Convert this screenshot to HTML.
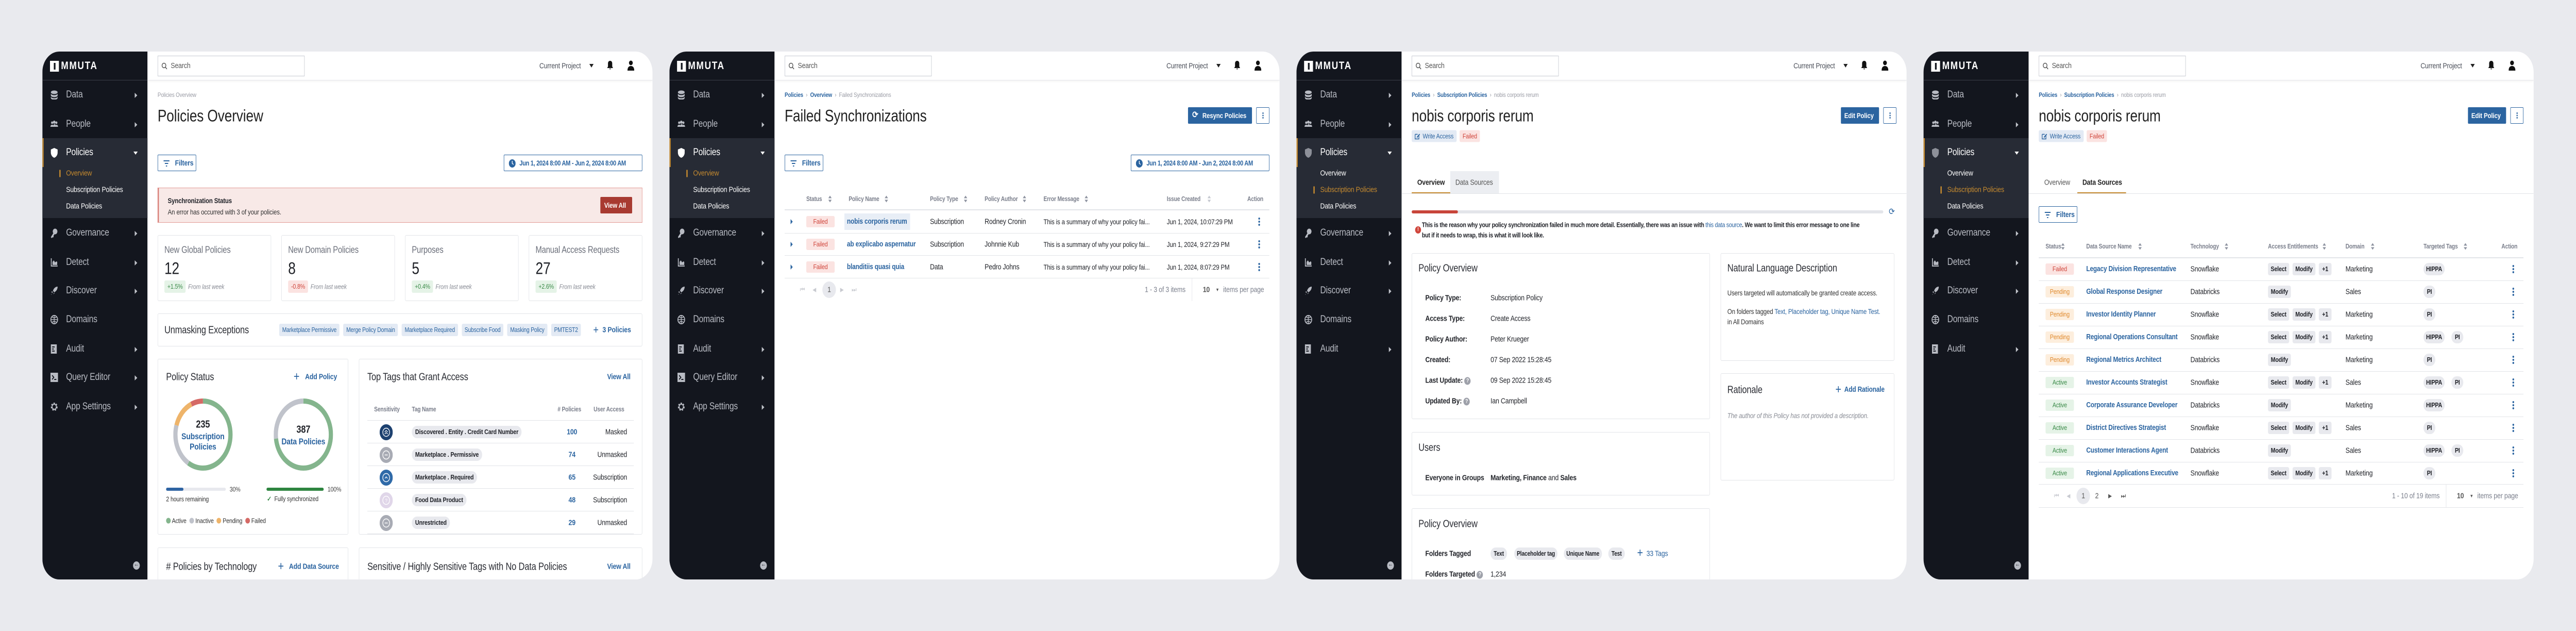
<!DOCTYPE html>
<html style="overflow:hidden"><head><meta charset="utf-8">
<style>
*{box-sizing:border-box;margin:0;padding:0;white-space:nowrap}
html{overflow:hidden}
body{width:6080px;height:1224px;background:#e9eaee;font-family:"Liberation Sans",Arial,sans-serif;color:#1f2127;position:relative;overflow:hidden;letter-spacing:-0.2px;transform-origin:0 0}
.p{position:absolute;top:100px;width:1440px;height:1024px;background:#fff;border-radius:40px;overflow:hidden}
.sb{position:absolute;left:0;top:0;width:248px;height:1024px;background:#13161e}
.x{position:absolute;white-space:nowrap;transform:translateY(-50%)}
.b{position:absolute}
.lsq{position:absolute;left:18px;top:18px;width:21px;height:21px;background:#fff}
.lsq:after{content:"";position:absolute;left:9px;top:4px;width:4px;height:13px;background:#13161e}
.lt{position:absolute;left:44px;top:28px;transform:translateY(-50%);color:#fff;font-weight:bold;font-size:21px;letter-spacing:2px}
.sbl{position:absolute;left:0;top:55px;width:248px;height:1px;background:#3a3e48}
.grp{position:absolute;left:0;top:168px;width:248px;height:155px;background:#272b35}
.obar{position:absolute;left:0;top:168px;width:3px;height:56px;background:#c58a2f}
.ni{position:absolute;left:0;width:248px;height:40px;margin-top:-20px;color:#b8bbc3;font-size:19px}
.ni svg{position:absolute;left:19px;top:11px}
.ni span{position:absolute;left:56px;top:50%;transform:translateY(-50%)}
.ni i{position:absolute;left:218px;top:16px;width:0;height:0;border-top:5px solid transparent;border-bottom:5px solid transparent;border-left:6px solid #c0c3ca}
.ni i.dn{left:215px;top:18px;border-left:5px solid transparent;border-right:5px solid transparent;border-top:6px solid #fff;border-bottom:0}
.si{position:absolute;left:56px;color:#fff;font-size:15px;transform:translateY(-50%)}
.si.on{color:#c58a2f}
.si.on:before{content:"";position:absolute;left:-16px;top:2px;width:3px;height:14px;background:#c58a2f}
.col{position:absolute;left:214px;top:989px;width:16px;height:16px;border-radius:50%;background:#b8bbc3}
.col:after{content:"←";position:absolute;left:2px;top:-2px;font-size:12px;color:#13161e;font-weight:bold}
.hd{position:absolute;left:248px;top:0;width:1192px;height:56px;border-bottom:1px solid #e6e7eb;box-shadow:0 2px 5px rgba(0,0,0,.05)}
.srch{position:absolute;left:272px;top:8px;width:347px;height:40px;border:1px solid #c7cad1}
.srch span{position:absolute;left:30px;top:10px;font-size:15px;color:#555}
.cp{position:absolute;left:1173px;top:28px;transform:translateY(-50%);font-size:15px;color:#4a4e58}
.bc{font-size:12px;color:#9a9ca5}
.bc b{color:#2b64a0}
.ttl{font-size:32px;color:#222}
.btn-o{position:absolute;border:1px solid #2b64a0;color:#2b64a0;font-weight:bold;font-size:15px;border-radius:2px}
.btn-f{position:absolute;background:#2b64a0;color:#fff;font-weight:bold;font-size:15px;border-radius:2px}
.card{position:absolute;border:1px solid #e2e4e8;border-radius:3px;background:#fff}
.ct{font-size:20px;color:#2a2c33}
.blue{color:#2b64a0}
.lk{color:#2b64a0;font-weight:bold}
.chip{position:absolute;height:24px;line-height:24px;padding:0 8px;font-size:13px;border-radius:3px;transform:translateY(-50%)}
.cb{background:#e3eaf4;color:#2b64a0}
.cg{background:#e8e9ee;color:#1f2127;font-weight:bold;border-radius:12px}
.cgs{background:#e8e9ee;color:#1f2127;font-weight:bold;border-radius:4px}
.st{position:absolute;height:22px;line-height:22px;text-align:center;font-size:13px;border-radius:3px;transform:translateY(-50%)}
.fa{background:#fbe3e1;color:#d0463c}
.pe{background:#fdeedd;color:#e08a2e}
.ac{background:#e5f3e7;color:#3a8a48}
.th{font-size:12.5px;color:#7c808d;font-weight:bold}
.hl{position:absolute;height:1px;background:#e2e4e8}
.td{font-size:15px}
.kb{position:absolute;width:4px;height:16px;transform:translateY(-50%)}
.kb:before,.kb:after,.kb span{content:"";position:absolute;left:0;width:4px;height:4px;border-radius:50%;background:#2b64a0}
.kb:before{top:0}.kb span{top:6px}.kb:after{top:12px}
.srt{position:absolute;transform:translateY(-50%)}
.um{position:absolute;left:559px;top:528px;display:flex;gap:9px}
.um div{height:24px;line-height:24px;padding:0 7px;font-size:12.5px;border-radius:3px;background:#e3eaf4;color:#2b64a0}
</style></head><body>

<!-- ========== PANEL 1 ========== -->
<div class="p" style="left:100px">
 <div class="sb">
  <div class="lsq"></div><div class="lt">MMUTA</div><div class="sbl"></div>
  <div class="grp"></div><div class="obar"></div>
  <div class="ni" style="top:84px"><svg width="18" height="18"><ellipse cx="9" cy="4" rx="8" ry="3.5" fill="#b8bbc3"/><path d="M1 6v4c0 2 3.5 3.5 8 3.5s8-1.5 8-3.5V6c0 2-3.5 3.5-8 3.5S1 8 1 6zM1 12v3c0 2 3.5 3.5 8 3.5s8-1.5 8-3.5v-3c0 2-3.5 3.5-8 3.5S1 14 1 12z" fill="#b8bbc3"/></svg><span>Data</span><i></i></div>
  <div class="ni" style="top:141px"><svg width="18" height="18"><circle cx="4" cy="6" r="2.5" fill="#b8bbc3"/><circle cx="14" cy="6" r="2.5" fill="#b8bbc3"/><circle cx="9" cy="5" r="3" fill="#b8bbc3"/><path d="M0 14c0-3 2-4 4-4s3 1 3 1 1-2 2-2 3 0 4 2c0 0 1-1 1-1 2 0 4 1 4 4z" fill="#b8bbc3"/></svg><span>People</span><i></i></div>
  <div class="ni" style="top:196px;color:#fff"><svg width="18" height="20"><path d="M9 0L1 3v6c0 5 4 9 8 10 4-1 8-5 8-10V3z" fill="#fff"/></svg><span>Policies</span><i class="dn"></i></div>
  <div class="si on" style="top:236px">Overview</div>
  <div class="si" style="top:268px">Subscription Policies</div>
  <div class="si" style="top:300px">Data Policies</div>
  <div class="ni" style="top:352px"><svg width="18" height="20"><circle cx="11" cy="6" r="5.5" fill="#b8bbc3"/><path d="M7 9L1 17l2 2 2-2 1 1 2-2-1-1 3-4z" fill="#b8bbc3"/></svg><span>Governance</span><i></i></div>
  <div class="ni" style="top:409px"><svg width="18" height="18"><path d="M1 1v16h16v-2H3V1z M5 14V8l3-3 3 4 3-2 2 1v6z" fill="#b8bbc3"/></svg><span>Detect</span><i></i></div>
  <div class="ni" style="top:464px"><svg width="18" height="18"><path d="M17 1c-5 0-9 3-11 8l3 3c5-2 8-6 8-11zM5 10l-3 1 3 3zM8 13l-1 3 3-3zM3 15l-2 2 2-1z" fill="#b8bbc3"/></svg><span>Discover</span><i></i></div>
  <div class="ni" style="top:520px"><svg width="18" height="18"><circle cx="9" cy="9" r="8" fill="none" stroke="#b8bbc3" stroke-width="2"/><path d="M1 9h16M9 1v16M4 4q5 3 10 0M4 14q5-3 10 0" stroke="#b8bbc3" stroke-width="1.5" fill="none"/></svg><span>Domains</span></div>
  <div class="ni" style="top:577px"><svg width="16" height="18"><path d="M1 0h14v18H1z" fill="#b8bbc3"/><path d="M4 4h6v2H4zM4 8h4v2H4zM4 12h6v2H4z" fill="#13161e"/></svg><span>Audit</span><i></i></div>
  <div class="ni" style="top:632px"><svg width="18" height="18"><path d="M0 0h18v18H0z" fill="#b8bbc3"/><path d="M4 5l4 4-4 4M9 13h5" stroke="#13161e" stroke-width="2" fill="none"/></svg><span>Query Editor</span><i></i></div>
  <div class="ni" style="top:689px"><svg width="18" height="18"><circle cx="9" cy="9" r="6" fill="none" stroke="#b8bbc3" stroke-width="4" stroke-dasharray="3 2.3"/><circle cx="9" cy="9" r="5" fill="none" stroke="#b8bbc3" stroke-width="2"/></svg><span>App Settings</span><i></i></div>
  <div class="col"></div>
 </div>
 <div class="hd"></div>
 <div class="srch"><svg class="b" style="left:8px;top:12px" width="14" height="14"><circle cx="6" cy="6" r="4.5" stroke="#555" stroke-width="1.6" fill="none"/><path d="M9.5 9.5L13 13" stroke="#555" stroke-width="1.6"/></svg><span>Search</span></div>
 <div class="cp">Current Project</div>
 <div class="b" style="left:1291px;top:24px;border-left:5px solid transparent;border-right:5px solid transparent;border-top:7px solid #222"></div>
 <svg class="b" style="left:1332px;top:18px" width="16" height="19"><path d="M8 0c-3 0-5 2-5 5v6l-2 3h14l-2-3V5c0-3-2-5-5-5zM6 15h4c0 2-4 2-4 0z" fill="#111"/></svg>
 <svg class="b" style="left:1381px;top:17px" width="16" height="20"><circle cx="8" cy="5" r="4.5" fill="#111"/><path d="M0 20c0-6 3-9 8-9s8 3 8 9z" fill="#111"/></svg>

 <div class="x bc" style="left:272px;top:84px">Policies Overview</div>
 <div class="x ttl" style="left:272px;top:125px">Policies Overview</div>
 <div class="btn-o" style="left:272px;top:200px;width:91px;height:32px"><svg class="b" style="left:13px;top:10px" width="14" height="12"><path d="M0 1h14M3 6h8M5.5 11h3" stroke="#2b64a0" stroke-width="2"/></svg><span class="b" style="left:40px;top:7px">Filters</span></div>
 <div class="btn-o" style="left:1089px;top:200px;width:327px;height:32px"><svg class="b" style="left:11px;top:8px" width="16" height="16"><circle cx="8" cy="8" r="8" fill="#2b64a0"/><path d="M8 3v5l3 2" stroke="#fff" stroke-width="1.6" fill="none"/></svg><span class="b" style="left:36px;top:8px;font-size:13.5px;letter-spacing:-0.4px">Jun 1, 2024 8:00 AM - Jun 2, 2024 8:00 AM</span></div>

 <div class="b" style="left:272px;top:264px;width:1144px;height:68px;background:#f8e9e7;border:1px solid #e29a95;border-left:3px solid #d9807a"></div>
 <div class="x" style="left:296px;top:289px;font-size:14px;font-weight:bold">Synchronization Status</div>
 <div class="x" style="left:296px;top:311px;font-size:14px;color:#333">An error has occurred with 3 of your policies.</div>
 <div class="btn-f" style="left:1317px;top:282px;width:75px;height:32px;background:#a83a31;border-radius:2px"><span class="b" style="left:9px;top:8px;font-size:14px">View All</span></div>

 <div class="card" style="left:272px;top:356px;width:268px;height:128px"></div>
 <div class="card" style="left:564px;top:356px;width:268px;height:128px"></div>
 <div class="card" style="left:856px;top:356px;width:268px;height:128px"></div>
 <div class="card" style="left:1148px;top:356px;width:268px;height:128px"></div>
 <div class="x" style="left:288px;top:385px;font-size:18px;color:#6b6f7a">New Global Policies</div>
 <div class="x" style="left:580px;top:385px;font-size:18px;color:#6b6f7a">New Domain Policies</div>
 <div class="x" style="left:872px;top:385px;font-size:18px;color:#6b6f7a">Purposes</div>
 <div class="x" style="left:1164px;top:385px;font-size:18px;color:#6b6f7a">Manual Access Requests</div>
 <div class="x" style="left:288px;top:421px;font-size:32px">12</div>
 <div class="x" style="left:580px;top:421px;font-size:32px">8</div>
 <div class="x" style="left:872px;top:421px;font-size:32px">5</div>
 <div class="x" style="left:1164px;top:421px;font-size:32px">27</div>
 <div class="chip ac" style="left:288px;top:456px;padding:0 7px">+1.5%</div><div class="x" style="left:344px;top:456px;font-size:13px;font-style:italic;color:#8a8d96">From last week</div>
 <div class="chip fa" style="left:580px;top:456px;padding:0 7px">-0.8%</div><div class="x" style="left:633px;top:456px;font-size:13px;font-style:italic;color:#8a8d96">From last week</div>
 <div class="chip ac" style="left:872px;top:456px;padding:0 7px">+0.4%</div><div class="x" style="left:928px;top:456px;font-size:13px;font-style:italic;color:#8a8d96">From last week</div>
 <div class="chip ac" style="left:1164px;top:456px;padding:0 7px">+2.6%</div><div class="x" style="left:1220px;top:456px;font-size:13px;font-style:italic;color:#8a8d96">From last week</div>

 <div class="card" style="left:272px;top:508px;width:1144px;height:64px"></div>
 <div class="x ct" style="left:288px;top:541px">Unmasking Exceptions</div>
 <div class="um"><div>Marketplace Permissive</div><div>Merge Policy Domain</div><div>Marketplace Required</div><div>Subscribe Food</div><div>Masking Policy</div><div>PMTEST2</div></div>
 <div class="x lk" style="left:1300px;top:540px;font-size:22px;font-weight:normal">+</div>
 <div class="x lk" style="left:1322px;top:540px;font-size:15px">3 Policies</div>

 <div class="card" style="left:272px;top:596px;width:450px;height:341px"></div>
 <div class="x ct" style="left:292px;top:632px">Policy Status</div>
 <div class="x lk" style="left:593px;top:631px;font-size:24px;font-weight:normal">+</div>
 <div class="x lk" style="left:620px;top:631px;font-size:15px">Add Policy</div>
 <svg class="b" style="left:309px;top:673px" width="140" height="140"><g transform="rotate(-90 70 70)" fill="none" stroke-width="10">
  <circle cx="70" cy="70" r="65" stroke="#84b58d" stroke-dasharray="240.5 408.4"/>
  <circle cx="70" cy="70" r="65" stroke="#c0c3cb" stroke-dasharray="83.9 408.4" stroke-dashoffset="-240.5"/>
  <circle cx="70" cy="70" r="65" stroke="#eeb46a" stroke-dasharray="55.6 408.4" stroke-dashoffset="-324.4"/>
  <circle cx="70" cy="70" r="65" stroke="#d56a66" stroke-dasharray="28.4 408.4" stroke-dashoffset="-380"/></g></svg>
 <div class="x" style="left:379px;top:724px;font-size:20px;font-weight:bold;transform:translate(-50%,-50%)">235</div>
 <div class="x lk" style="left:379px;top:747px;font-size:17px;transform:translate(-50%,-50%)">Subscription</div>
 <div class="x lk" style="left:379px;top:767px;font-size:17px;transform:translate(-50%,-50%)">Policies</div>
 <svg class="b" style="left:546px;top:673px" width="140" height="140"><g transform="rotate(-90 70 70)" fill="none" stroke-width="10">
  <circle cx="70" cy="70" r="65" stroke="#84b58d" stroke-dasharray="298.4 408.4"/>
  <circle cx="70" cy="70" r="65" stroke="#c0c3cb" stroke-dasharray="110 408.4" stroke-dashoffset="-298.4"/></g></svg>
 <div class="x" style="left:616px;top:734px;font-size:20px;font-weight:bold;transform:translate(-50%,-50%)">387</div>
 <div class="x lk" style="left:616px;top:757px;font-size:17px;transform:translate(-50%,-50%)">Data Policies</div>
 <div class="b" style="left:292px;top:846px;width:141px;height:6px;border-radius:3px;background:#e8e9ee"></div>
 <div class="b" style="left:292px;top:846px;width:41px;height:6px;border-radius:3px;background:#2f64a3"></div>
 <div class="x" style="left:442px;top:849px;font-size:13px;color:#444">30%</div>
 <div class="b" style="left:529px;top:846px;width:135px;height:6px;border-radius:3px;background:#2e8540"></div>
 <div class="x" style="left:673px;top:849px;font-size:13px;color:#444">100%</div>
 <div class="x" style="left:292px;top:868px;font-size:13px;color:#333">2 hours remaining</div>
 <div class="x" style="left:530px;top:868px;font-size:13px;color:#333"><span style="color:#2e8540;font-weight:bold">✓</span>&nbsp; Fully synchronized</div>
 <div class="x" style="left:292px;top:910px;font-size:13px;color:#333"><span style="display:inline-block;width:11px;height:11px;border-radius:50%;background:#84b58d;vertical-align:-1px"></span> Active &nbsp;<span style="display:inline-block;width:11px;height:11px;border-radius:50%;background:#c0c3cb;vertical-align:-1px"></span> Inactive &nbsp;<span style="display:inline-block;width:11px;height:11px;border-radius:50%;background:#eeb46a;vertical-align:-1px"></span> Pending &nbsp;<span style="display:inline-block;width:11px;height:11px;border-radius:50%;background:#d56a66;vertical-align:-1px"></span> Failed</div>

 <div class="card" style="left:747px;top:596px;width:669px;height:341px"></div>
 <div class="x ct" style="left:767px;top:632px">Top Tags that Grant Access</div>
 <div class="x lk" style="left:1333px;top:631px;font-size:15px">View All</div>
 <div class="x th" style="left:783px;top:694px">Sensitivity</div>
 <div class="x th" style="left:872px;top:694px">Tag Name</div>
 <div class="x th" style="left:1216px;top:694px"># Policies</div>
 <div class="x th" style="left:1301px;top:694px">User Access</div>
 <div class="hl" style="left:767px;top:715px;width:629px"></div>
 <div class="hl" style="left:767px;top:759px;width:629px"></div>
 <div class="hl" style="left:767px;top:803px;width:629px"></div>
 <div class="hl" style="left:767px;top:847px;width:629px"></div>
 <div class="hl" style="left:767px;top:891px;width:629px"></div>
 <div class="hl" style="left:767px;top:935px;width:629px"></div>
 <svg class="b" style="left:796px;top:723px" width="31" height="31"><circle cx="15.5" cy="15.5" r="15.5" fill="#1d4170"/><circle cx="15.5" cy="15.5" r="8" fill="none" stroke="#fff" stroke-width="1.5"/><path d="M12 15l3.5-3 3.5 3M12 19l3.5-3 3.5 3" stroke="#fff" stroke-width="1.4" fill="none"/></svg>
 <svg class="b" style="left:796px;top:767px" width="31" height="31"><circle cx="15.5" cy="15.5" r="15.5" fill="#a8abb4"/><circle cx="15.5" cy="15.5" r="8" fill="none" stroke="#fff" stroke-width="1.5"/><path d="M12 15.5h7" stroke="#fff" stroke-width="1.6"/></svg>
 <svg class="b" style="left:796px;top:811px" width="31" height="31"><circle cx="15.5" cy="15.5" r="15.5" fill="#2f6aa8"/><circle cx="15.5" cy="15.5" r="8" fill="none" stroke="#fff" stroke-width="1.5"/><path d="M12.5 17l3-3 3 3" stroke="#fff" stroke-width="1.5" fill="none"/></svg>
 <svg class="b" style="left:796px;top:855px" width="31" height="31"><circle cx="15.5" cy="15.5" r="15.5" fill="#e0d6e9"/><circle cx="15.5" cy="15.5" r="8" fill="none" stroke="#fff" stroke-width="1.5"/><text x="15.5" y="19.5" font-size="10" text-anchor="middle" fill="#fff" font-family="Liberation Sans">?</text></svg>
 <svg class="b" style="left:796px;top:899px" width="31" height="31"><circle cx="15.5" cy="15.5" r="15.5" fill="#a8abb4"/><circle cx="15.5" cy="15.5" r="8" fill="none" stroke="#fff" stroke-width="1.5"/><path d="M12 15.5h7" stroke="#fff" stroke-width="1.6"/></svg>
 <div class="chip cg" style="left:872px;top:738px;font-size:13px">Discovered . Entity . Credit Card Number</div>
 <div class="chip cg" style="left:872px;top:782px;font-size:13px">Marketplace . Permissive</div>
 <div class="chip cg" style="left:872px;top:826px;font-size:13px">Marketplace . Required</div>
 <div class="chip cg" style="left:872px;top:870px;font-size:13px">Food Data Product</div>
 <div class="chip cg" style="left:872px;top:914px;font-size:13px">Unrestricted</div>
 <div class="x lk" style="left:1250px;top:738px;font-size:15px;transform:translate(-50%,-50%)">100</div>
 <div class="x lk" style="left:1250px;top:782px;font-size:15px;transform:translate(-50%,-50%)">74</div>
 <div class="x lk" style="left:1250px;top:826px;font-size:15px;transform:translate(-50%,-50%)">65</div>
 <div class="x lk" style="left:1250px;top:870px;font-size:15px;transform:translate(-50%,-50%)">48</div>
 <div class="x lk" style="left:1250px;top:914px;font-size:15px;transform:translate(-50%,-50%)">29</div>
 <div class="x td" style="right:60px;top:738px">Masked</div>
 <div class="x td" style="right:60px;top:782px">Unmasked</div>
 <div class="x td" style="right:60px;top:826px">Subscription</div>
 <div class="x td" style="right:60px;top:870px">Subscription</div>
 <div class="x td" style="right:60px;top:914px">Unmasked</div>

 <div class="card" style="left:272px;top:962px;width:450px;height:120px"></div>
 <div class="x ct" style="left:292px;top:1000px"># Policies by Technology</div>
 <div class="x lk" style="left:556px;top:999px;font-size:24px;font-weight:normal">+</div>
 <div class="x lk" style="left:582px;top:999px;font-size:15px">Add Data Source</div>
 <div class="card" style="left:747px;top:962px;width:669px;height:120px"></div>
 <div class="x ct" style="left:767px;top:1000px">Sensitive / Highly Sensitive Tags with No Data Policies</div>
 <div class="x lk" style="left:1333px;top:999px;font-size:15px">View All</div>
</div>

<!-- ========== PANEL 2 ========== -->
<div class="p" style="left:1580px">
 <div class="sb">
  <div class="lsq"></div><div class="lt">MMUTA</div><div class="sbl"></div>
  <div class="grp"></div><div class="obar"></div>
  <div class="ni" style="top:84px"><svg width="18" height="18"><ellipse cx="9" cy="4" rx="8" ry="3.5" fill="#b8bbc3"/><path d="M1 6v4c0 2 3.5 3.5 8 3.5s8-1.5 8-3.5V6c0 2-3.5 3.5-8 3.5S1 8 1 6zM1 12v3c0 2 3.5 3.5 8 3.5s8-1.5 8-3.5v-3c0 2-3.5 3.5-8 3.5S1 14 1 12z" fill="#b8bbc3"/></svg><span>Data</span><i></i></div>
  <div class="ni" style="top:141px"><svg width="18" height="18"><circle cx="4" cy="6" r="2.5" fill="#b8bbc3"/><circle cx="14" cy="6" r="2.5" fill="#b8bbc3"/><circle cx="9" cy="5" r="3" fill="#b8bbc3"/><path d="M0 14c0-3 2-4 4-4s3 1 3 1 1-2 2-2 3 0 4 2c0 0 1-1 1-1 2 0 4 1 4 4z" fill="#b8bbc3"/></svg><span>People</span><i></i></div>
  <div class="ni" style="top:196px;color:#fff"><svg width="18" height="20"><path d="M9 0L1 3v6c0 5 4 9 8 10 4-1 8-5 8-10V3z" fill="#fff"/></svg><span>Policies</span><i class="dn"></i></div>
  <div class="si on" style="top:236px">Overview</div>
  <div class="si" style="top:268px">Subscription Policies</div>
  <div class="si" style="top:300px">Data Policies</div>
  <div class="ni" style="top:352px"><svg width="18" height="20"><circle cx="11" cy="6" r="5.5" fill="#b8bbc3"/><path d="M7 9L1 17l2 2 2-2 1 1 2-2-1-1 3-4z" fill="#b8bbc3"/></svg><span>Governance</span><i></i></div>
  <div class="ni" style="top:409px"><svg width="18" height="18"><path d="M1 1v16h16v-2H3V1z M5 14V8l3-3 3 4 3-2 2 1v6z" fill="#b8bbc3"/></svg><span>Detect</span><i></i></div>
  <div class="ni" style="top:464px"><svg width="18" height="18"><path d="M17 1c-5 0-9 3-11 8l3 3c5-2 8-6 8-11zM5 10l-3 1 3 3zM8 13l-1 3 3-3zM3 15l-2 2 2-1z" fill="#b8bbc3"/></svg><span>Discover</span><i></i></div>
  <div class="ni" style="top:520px"><svg width="18" height="18"><circle cx="9" cy="9" r="8" fill="none" stroke="#b8bbc3" stroke-width="2"/><path d="M1 9h16M9 1v16M4 4q5 3 10 0M4 14q5-3 10 0" stroke="#b8bbc3" stroke-width="1.5" fill="none"/></svg><span>Domains</span></div>
  <div class="ni" style="top:577px"><svg width="16" height="18"><path d="M1 0h14v18H1z" fill="#b8bbc3"/><path d="M4 4h6v2H4zM4 8h4v2H4zM4 12h6v2H4z" fill="#13161e"/></svg><span>Audit</span><i></i></div>
  <div class="ni" style="top:632px"><svg width="18" height="18"><path d="M0 0h18v18H0z" fill="#b8bbc3"/><path d="M4 5l4 4-4 4M9 13h5" stroke="#13161e" stroke-width="2" fill="none"/></svg><span>Query Editor</span><i></i></div>
  <div class="ni" style="top:689px"><svg width="18" height="18"><circle cx="9" cy="9" r="6" fill="none" stroke="#b8bbc3" stroke-width="4" stroke-dasharray="3 2.3"/><circle cx="9" cy="9" r="5" fill="none" stroke="#b8bbc3" stroke-width="2"/></svg><span>App Settings</span><i></i></div>
  <div class="col"></div>
 </div>
 <div class="hd"></div>
 <div class="srch"><svg class="b" style="left:8px;top:12px" width="14" height="14"><circle cx="6" cy="6" r="4.5" stroke="#555" stroke-width="1.6" fill="none"/><path d="M9.5 9.5L13 13" stroke="#555" stroke-width="1.6"/></svg><span>Search</span></div>
 <div class="cp">Current Project</div>
 <div class="b" style="left:1291px;top:24px;border-left:5px solid transparent;border-right:5px solid transparent;border-top:7px solid #222"></div>
 <svg class="b" style="left:1332px;top:18px" width="16" height="19"><path d="M8 0c-3 0-5 2-5 5v6l-2 3h14l-2-3V5c0-3-2-5-5-5zM6 15h4c0 2-4 2-4 0z" fill="#111"/></svg>
 <svg class="b" style="left:1381px;top:17px" width="16" height="20"><circle cx="8" cy="5" r="4.5" fill="#111"/><path d="M0 20c0-6 3-9 8-9s8 3 8 9z" fill="#111"/></svg>

 <div class="x bc" style="left:272px;top:84px"><b>Policies</b> &nbsp;›&nbsp; <b>Overview</b> &nbsp;›&nbsp; Failed Synchronizations</div>
 <div class="x ttl" style="left:272px;top:125px">Failed Synchronizations</div>
 <div class="btn-f" style="left:1224px;top:108px;width:151px;height:32px"><span class="b" style="left:10px;top:5px;font-size:17px">⟳</span><span class="b" style="left:34px;top:8px;font-size:14px">Resync Policies</span></div>
 <div class="btn-o" style="left:1385px;top:108px;width:31px;height:32px"><div class="kb" style="left:13px;top:15px;transform:translateY(-50%) scale(.75)"><span></span></div></div>
 <div class="btn-o" style="left:272px;top:200px;width:91px;height:32px"><svg class="b" style="left:13px;top:10px" width="14" height="12"><path d="M0 1h14M3 6h8M5.5 11h3" stroke="#2b64a0" stroke-width="2"/></svg><span class="b" style="left:40px;top:7px">Filters</span></div>
 <div class="btn-o" style="left:1089px;top:200px;width:327px;height:32px"><svg class="b" style="left:11px;top:8px" width="16" height="16"><circle cx="8" cy="8" r="8" fill="#2b64a0"/><path d="M8 3v5l3 2" stroke="#fff" stroke-width="1.6" fill="none"/></svg><span class="b" style="left:36px;top:8px;font-size:13.5px;letter-spacing:-0.4px">Jun 1, 2024 8:00 AM - Jun 2, 2024 8:00 AM</span></div>

 <div class="x th" style="left:323px;top:286px">Status</div><svg class="srt" style="left:375px;top:286px" width="8" height="13"><path d="M4 0L8 5H0zM4 13L0 8h8z" fill="#8e93a0"/></svg>
 <div class="x th" style="left:423px;top:286px">Policy Name</div><svg class="srt" style="left:508px;top:286px" width="8" height="13"><path d="M4 0L8 5H0zM4 13L0 8h8z" fill="#8e93a0"/></svg>
 <div class="x th" style="left:615px;top:286px">Policy Type</div><svg class="srt" style="left:695px;top:286px" width="8" height="13"><path d="M4 0L8 5H0zM4 13L0 8h8z" fill="#8e93a0"/></svg>
 <div class="x th" style="left:744px;top:286px">Policy Author</div><svg class="srt" style="left:834px;top:286px" width="8" height="13"><path d="M4 0L8 5H0zM4 13L0 8h8z" fill="#8e93a0"/></svg>
 <div class="x th" style="left:883px;top:286px">Error Message</div><svg class="srt" style="left:980px;top:286px" width="8" height="13"><path d="M4 0L8 5H0zM4 13L0 8h8z" fill="#8e93a0"/></svg>
 <div class="x th" style="left:1174px;top:286px">Issue Created</div><svg class="srt" style="left:1270px;top:286px" width="8" height="13"><path d="M4 0L8 5H0zM4 13L0 8h8z" fill="#c4c7cf"/></svg>
 <div class="x th" style="left:1364px;top:286px">Action</div>
 <div class="hl" style="left:272px;top:306px;width:1144px;height:2px"></div>
 <div class="hl" style="left:272px;top:352px;width:1144px"></div>
 <div class="hl" style="left:272px;top:395px;width:1144px"></div>
 <div class="hl" style="left:272px;top:439px;width:1144px"></div>
 <div class="b" style="left:286px;top:325px;border-top:5px solid transparent;border-bottom:5px solid transparent;border-left:5px solid #2b64a0"></div>
 <div class="b" style="left:286px;top:369px;border-top:5px solid transparent;border-bottom:5px solid transparent;border-left:5px solid #2b64a0"></div>
 <div class="b" style="left:286px;top:413px;border-top:5px solid transparent;border-bottom:5px solid transparent;border-left:5px solid #2b64a0"></div>
 <div class="st fa" style="left:323px;top:330px;width:67px">Failed</div>
 <div class="st fa" style="left:323px;top:374px;width:67px">Failed</div>
 <div class="st fa" style="left:323px;top:418px;width:67px">Failed</div>
 <div class="b" style="left:413px;top:314px;width:155px;height:32px;background:#e8eef6"></div>
 <div class="x lk" style="left:419px;top:330px;font-size:14.5px">nobis corporis rerum</div>
 <div class="x lk" style="left:419px;top:374px;font-size:14.5px">ab explicabo aspernatur</div>
 <div class="x lk" style="left:419px;top:418px;font-size:14.5px">blanditiis quasi quia</div>
 <div class="x td" style="left:615px;top:330px">Subscription</div><div class="x td" style="left:615px;top:374px">Subscription</div><div class="x td" style="left:615px;top:418px">Data</div>
 <div class="x td" style="left:744px;top:330px">Rodney Cronin</div><div class="x td" style="left:744px;top:374px">Johnnie Kub</div><div class="x td" style="left:744px;top:418px">Pedro Johns</div>
 <div class="x td" style="left:883px;top:330px;font-size:14px">This is a summary of why your policy fai...</div>
 <div class="x td" style="left:883px;top:374px;font-size:14px">This is a summary of why your policy fai...</div>
 <div class="x td" style="left:883px;top:418px;font-size:14px">This is a summary of why your policy fai...</div>
 <div class="x td" style="left:1174px;top:330px;font-size:14px">Jun 1, 2024, 10:07:29 PM</div>
 <div class="x td" style="left:1174px;top:374px;font-size:14px">Jun 1, 2024, 9:27:29 PM</div>
 <div class="x td" style="left:1174px;top:418px;font-size:14px">Jun 1, 2024, 8:07:29 PM</div>
 <div class="kb" style="left:1390px;top:330px"><span></span></div>
 <div class="kb" style="left:1390px;top:374px"><span></span></div>
 <div class="kb" style="left:1390px;top:418px"><span></span></div>
 <div class="x" style="left:308px;top:462px;font-size:13px;color:#c8cad0">⏮</div>
 <div class="x" style="left:338px;top:462px;font-size:11px;color:#c8cad0">◀</div>
 <div class="b" style="left:361px;top:446px;width:32px;height:32px;border-radius:50%;background:#e8e9ee"></div>
 <div class="x" style="left:373px;top:462px;font-size:15px;color:#555">1</div>
 <div class="x" style="left:403px;top:462px;font-size:11px;color:#c8cad0">▶</div>
 <div class="x" style="left:430px;top:462px;font-size:13px;color:#c8cad0">⏭</div>
 <div class="x" style="right:222px;top:462px;font-size:15px;color:#7c808d">1 - 3 of 3 items</div>
 <div class="b" style="left:1233px;top:440px;width:1px;height:44px;background:#e2e4e8"></div>
 <div class="x" style="left:1259px;top:462px;font-size:15px;color:#555;font-weight:bold">10</div>
 <div class="x" style="left:1289px;top:462px;font-size:9px;color:#555">▼</div>
 <div class="x" style="left:1307px;top:462px;font-size:15px;color:#7c808d">items per page</div>
</div>

<!-- ========== PANEL 3 ========== -->
<div class="p" style="left:3060px">
 <div class="sb">
  <div class="lsq"></div><div class="lt">MMUTA</div><div class="sbl"></div>
  <div class="grp"></div><div class="obar"></div>
  <div class="ni" style="top:84px"><svg width="18" height="18"><ellipse cx="9" cy="4" rx="8" ry="3.5" fill="#b8bbc3"/><path d="M1 6v4c0 2 3.5 3.5 8 3.5s8-1.5 8-3.5V6c0 2-3.5 3.5-8 3.5S1 8 1 6zM1 12v3c0 2 3.5 3.5 8 3.5s8-1.5 8-3.5v-3c0 2-3.5 3.5-8 3.5S1 14 1 12z" fill="#b8bbc3"/></svg><span>Data</span><i></i></div>
  <div class="ni" style="top:141px"><svg width="18" height="18"><circle cx="4" cy="6" r="2.5" fill="#b8bbc3"/><circle cx="14" cy="6" r="2.5" fill="#b8bbc3"/><circle cx="9" cy="5" r="3" fill="#b8bbc3"/><path d="M0 14c0-3 2-4 4-4s3 1 3 1 1-2 2-2 3 0 4 2c0 0 1-1 1-1 2 0 4 1 4 4z" fill="#b8bbc3"/></svg><span>People</span><i></i></div>
  <div class="ni" style="top:196px;color:#fff"><svg width="18" height="20"><path d="M9 0L1 3v6c0 5 4 9 8 10 4-1 8-5 8-10V3z" fill="#8d9099"/></svg><span>Policies</span><i class="dn"></i></div>
  <div class="si" style="top:236px">Overview</div>
  <div class="si on" style="top:268px">Subscription Policies</div>
  <div class="si" style="top:300px">Data Policies</div>
  <div class="ni" style="top:352px"><svg width="18" height="20"><circle cx="11" cy="6" r="5.5" fill="#b8bbc3"/><path d="M7 9L1 17l2 2 2-2 1 1 2-2-1-1 3-4z" fill="#b8bbc3"/></svg><span>Governance</span><i></i></div>
  <div class="ni" style="top:409px"><svg width="18" height="18"><path d="M1 1v16h16v-2H3V1z M5 14V8l3-3 3 4 3-2 2 1v6z" fill="#b8bbc3"/></svg><span>Detect</span><i></i></div>
  <div class="ni" style="top:464px"><svg width="18" height="18"><path d="M17 1c-5 0-9 3-11 8l3 3c5-2 8-6 8-11zM5 10l-3 1 3 3zM8 13l-1 3 3-3zM3 15l-2 2 2-1z" fill="#b8bbc3"/></svg><span>Discover</span><i></i></div>
  <div class="ni" style="top:520px"><svg width="18" height="18"><circle cx="9" cy="9" r="8" fill="none" stroke="#b8bbc3" stroke-width="2"/><path d="M1 9h16M9 1v16M4 4q5 3 10 0M4 14q5-3 10 0" stroke="#b8bbc3" stroke-width="1.5" fill="none"/></svg><span>Domains</span></div>
  <div class="ni" style="top:577px"><svg width="16" height="18"><path d="M1 0h14v18H1z" fill="#b8bbc3"/><path d="M4 4h6v2H4zM4 8h4v2H4zM4 12h6v2H4z" fill="#13161e"/></svg><span>Audit</span><i></i></div>
  <div class="col"></div>
 </div>
 <div class="hd"></div>
 <div class="srch"><svg class="b" style="left:8px;top:12px" width="14" height="14"><circle cx="6" cy="6" r="4.5" stroke="#555" stroke-width="1.6" fill="none"/><path d="M9.5 9.5L13 13" stroke="#555" stroke-width="1.6"/></svg><span>Search</span></div>
 <div class="cp">Current Project</div>
 <div class="b" style="left:1291px;top:24px;border-left:5px solid transparent;border-right:5px solid transparent;border-top:7px solid #222"></div>
 <svg class="b" style="left:1332px;top:18px" width="16" height="19"><path d="M8 0c-3 0-5 2-5 5v6l-2 3h14l-2-3V5c0-3-2-5-5-5zM6 15h4c0 2-4 2-4 0z" fill="#111"/></svg>
 <svg class="b" style="left:1381px;top:17px" width="16" height="20"><circle cx="8" cy="5" r="4.5" fill="#111"/><path d="M0 20c0-6 3-9 8-9s8 3 8 9z" fill="#111"/></svg>

 <div class="x bc" style="left:272px;top:84px"><b>Policies</b> &nbsp;›&nbsp; <b>Subscription Policies</b> &nbsp;›&nbsp; nobis corporis rerum</div>
 <div class="x ttl" style="left:272px;top:125px">nobis corporis rerum</div>
 <div class="chip cb" style="left:272px;top:164px;height:23px;line-height:23px;padding-left:26px;padding-right:7px"><svg class="b" style="left:7px;top:5px" width="13" height="13"><path d="M1 3h6M1 3v9h9V6" stroke="#2b64a0" stroke-width="1.5" fill="none"/><path d="M5 8l6-6 1.5 1.5-6 6H5z" fill="#2b64a0"/></svg>Write Access</div>
 <div class="chip fa" style="left:385px;top:164px;height:23px;line-height:23px;padding:0 7px">Failed</div>
 <div class="btn-f" style="left:1285px;top:108px;width:90px;height:32px"><span class="b" style="left:8px;top:8px;font-size:14px">Edit Policy</span></div>
 <div class="btn-o" style="left:1385px;top:108px;width:31px;height:32px"><div class="kb" style="left:13px;top:15px;transform:translateY(-50%) scale(.75)"><span></span></div></div>

 <div class="b" style="left:363px;top:232px;width:115px;height:43px;background:#eceef2"></div>
 <div class="x" style="left:285px;top:254px;font-size:15px;font-weight:bold;color:#222">Overview</div>
 <div class="x" style="left:375px;top:254px;font-size:15px;color:#555">Data Sources</div>
 <div class="b" style="left:272px;top:273px;width:91px;height:2px;background:#c58a2f"></div>
 <div class="hl" style="left:248px;top:275px;width:1192px"></div>

 <div class="b" style="left:272px;top:308px;width:1113px;height:6px;border-radius:3px;background:#e3e5ea"></div>
 <div class="b" style="left:272px;top:308px;width:109px;height:6px;border-radius:3px;background:#c8453a"></div>
 <div class="x lk" style="left:1398px;top:311px;font-size:17px;font-weight:normal">⟳</div>
 <div class="b" style="left:280px;top:339px;width:14px;height:14px;border-radius:50%;background:#d0463c;color:#fff;font-size:10px;text-align:center;line-height:14px;font-weight:bold">!</div>
 <div class="x" style="left:296px;top:336px;font-size:13px;font-weight:bold;letter-spacing:-0.35px">This is the reason why your policy synchronization failed in much more detail. Essentially, there was an issue with <span style="color:#2b64a0;font-weight:normal">this data source</span>. We want to limit this error message to one line</div>
 <div class="x" style="left:296px;top:356px;font-size:13px;font-weight:bold;letter-spacing:-0.35px">but if it needs to wrap, this is what it will look like.</div>

 <div class="card" style="left:272px;top:391px;width:704px;height:322px"></div>
 <div class="x ct" style="left:288px;top:421px">Policy Overview</div>
 <div class="x td" style="left:304px;top:478px;font-weight:bold">Policy Type:</div><div class="x td" style="left:458px;top:478px">Subscription Policy</div>
 <div class="x td" style="left:304px;top:518px;font-weight:bold">Access Type:</div><div class="x td" style="left:458px;top:518px">Create Access</div>
 <div class="x td" style="left:304px;top:558px;font-weight:bold">Policy Author:</div><div class="x td" style="left:458px;top:558px">Peter Krueger</div>
 <div class="x td" style="left:304px;top:598px;font-weight:bold">Created:</div><div class="x td" style="left:458px;top:598px">07 Sep 2022 15:28:45</div>
 <div class="x td" style="left:304px;top:638px;font-weight:bold">Last Update: <span style="display:inline-block;width:15px;height:15px;border-radius:50%;background:#9ea1aa;color:#fff;font-size:11px;text-align:center;line-height:15px;vertical-align:1px">?</span></div><div class="x td" style="left:458px;top:638px">09 Sep 2022 15:28:45</div>
 <div class="x td" style="left:304px;top:678px;font-weight:bold">Updated By: <span style="display:inline-block;width:15px;height:15px;border-radius:50%;background:#9ea1aa;color:#fff;font-size:11px;text-align:center;line-height:15px;vertical-align:1px">?</span></div><div class="x td" style="left:458px;top:678px">Ian Campbell</div>

 <div class="card" style="left:1001px;top:391px;width:410px;height:209px"></div>
 <div class="x ct" style="left:1017px;top:421px">Natural Language Description</div>
 <div class="x" style="left:1017px;top:468px;color:#333;font-size:14px">Users targeted will automatically be granted create access.</div>
 <div class="x" style="left:1017px;top:504px;color:#333;font-size:14px">On folders tagged <span class="blue">Text, Placeholder tag, Unique Name Test.</span></div>
 <div class="x" style="left:1017px;top:524px;color:#333;font-size:14px">in All Domains</div>

 <div class="card" style="left:1001px;top:624px;width:410px;height:208px"></div>
 <div class="x ct" style="left:1017px;top:657px">Rationale</div>
 <div class="x lk" style="left:1272px;top:656px;font-size:24px;font-weight:normal">+</div>
 <div class="x lk" style="left:1293px;top:656px;font-size:14.5px">Add Rationale</div>
 <div class="x" style="left:1017px;top:706px;font-size:14px;font-style:italic;color:#8a8d96">The author of this Policy has not provided a description.</div>

 <div class="card" style="left:272px;top:738px;width:704px;height:123px"></div>
 <div class="x ct" style="left:288px;top:769px">Users</div>
 <div class="x td" style="left:304px;top:827px;font-weight:bold">Everyone in Groups</div>
 <div class="x td" style="left:458px;top:827px"><b>Marketing, Finance</b> and <b>Sales</b></div>

 <div class="card" style="left:272px;top:886px;width:704px;height:200px"></div>
 <div class="x ct" style="left:288px;top:917px">Policy Overview</div>
 <div class="x td" style="left:304px;top:974px;font-weight:bold">Folders Tagged</div>
 <div class="chip cg" style="left:458px;top:974px;min-width:39px;font-size:12.5px;padding:0 6px;text-align:center">Text</div>
 <div class="chip cg" style="left:514px;top:974px;min-width:100px;font-size:12.5px;padding:0 6px;text-align:center">Placeholder tag</div>
 <div class="chip cg" style="left:631px;top:974px;min-width:88px;font-size:12.5px;padding:0 6px;text-align:center">Unique Name</div>
 <div class="chip cg" style="left:736px;top:974px;min-width:39px;font-size:12.5px;padding:0 6px;text-align:center">Test</div>
 <div class="x lk" style="left:804px;top:973px;font-size:24px;font-weight:normal">+</div>
 <div class="x blue" style="left:826px;top:974px;font-size:15px">33 Tags</div>
 <div class="x td" style="left:304px;top:1014px;font-weight:bold">Folders Targeted <span style="display:inline-block;width:15px;height:15px;border-radius:50%;background:#9ea1aa;color:#fff;font-size:11px;text-align:center;line-height:15px;vertical-align:1px">?</span></div>
 <div class="x td" style="left:458px;top:1014px">1,234</div>
</div>

<!-- ========== PANEL 4 ========== -->
<div class="p" style="left:4540px">
 <div class="sb">
  <div class="lsq"></div><div class="lt">MMUTA</div><div class="sbl"></div>
  <div class="grp"></div><div class="obar"></div>
  <div class="ni" style="top:84px"><svg width="18" height="18"><ellipse cx="9" cy="4" rx="8" ry="3.5" fill="#b8bbc3"/><path d="M1 6v4c0 2 3.5 3.5 8 3.5s8-1.5 8-3.5V6c0 2-3.5 3.5-8 3.5S1 8 1 6zM1 12v3c0 2 3.5 3.5 8 3.5s8-1.5 8-3.5v-3c0 2-3.5 3.5-8 3.5S1 14 1 12z" fill="#b8bbc3"/></svg><span>Data</span><i></i></div>
  <div class="ni" style="top:141px"><svg width="18" height="18"><circle cx="4" cy="6" r="2.5" fill="#b8bbc3"/><circle cx="14" cy="6" r="2.5" fill="#b8bbc3"/><circle cx="9" cy="5" r="3" fill="#b8bbc3"/><path d="M0 14c0-3 2-4 4-4s3 1 3 1 1-2 2-2 3 0 4 2c0 0 1-1 1-1 2 0 4 1 4 4z" fill="#b8bbc3"/></svg><span>People</span><i></i></div>
  <div class="ni" style="top:196px;color:#fff"><svg width="18" height="20"><path d="M9 0L1 3v6c0 5 4 9 8 10 4-1 8-5 8-10V3z" fill="#8d9099"/></svg><span>Policies</span><i class="dn"></i></div>
  <div class="si" style="top:236px">Overview</div>
  <div class="si on" style="top:268px">Subscription Policies</div>
  <div class="si" style="top:300px">Data Policies</div>
  <div class="ni" style="top:352px"><svg width="18" height="20"><circle cx="11" cy="6" r="5.5" fill="#b8bbc3"/><path d="M7 9L1 17l2 2 2-2 1 1 2-2-1-1 3-4z" fill="#b8bbc3"/></svg><span>Governance</span><i></i></div>
  <div class="ni" style="top:409px"><svg width="18" height="18"><path d="M1 1v16h16v-2H3V1z M5 14V8l3-3 3 4 3-2 2 1v6z" fill="#b8bbc3"/></svg><span>Detect</span><i></i></div>
  <div class="ni" style="top:464px"><svg width="18" height="18"><path d="M17 1c-5 0-9 3-11 8l3 3c5-2 8-6 8-11zM5 10l-3 1 3 3zM8 13l-1 3 3-3zM3 15l-2 2 2-1z" fill="#b8bbc3"/></svg><span>Discover</span><i></i></div>
  <div class="ni" style="top:520px"><svg width="18" height="18"><circle cx="9" cy="9" r="8" fill="none" stroke="#b8bbc3" stroke-width="2"/><path d="M1 9h16M9 1v16M4 4q5 3 10 0M4 14q5-3 10 0" stroke="#b8bbc3" stroke-width="1.5" fill="none"/></svg><span>Domains</span></div>
  <div class="ni" style="top:577px"><svg width="16" height="18"><path d="M1 0h14v18H1z" fill="#b8bbc3"/><path d="M4 4h6v2H4zM4 8h4v2H4zM4 12h6v2H4z" fill="#13161e"/></svg><span>Audit</span><i></i></div>
  <div class="col"></div>
 </div>
 <div class="hd"></div>
 <div class="srch"><svg class="b" style="left:8px;top:12px" width="14" height="14"><circle cx="6" cy="6" r="4.5" stroke="#555" stroke-width="1.6" fill="none"/><path d="M9.5 9.5L13 13" stroke="#555" stroke-width="1.6"/></svg><span>Search</span></div>
 <div class="cp">Current Project</div>
 <div class="b" style="left:1291px;top:24px;border-left:5px solid transparent;border-right:5px solid transparent;border-top:7px solid #222"></div>
 <svg class="b" style="left:1332px;top:18px" width="16" height="19"><path d="M8 0c-3 0-5 2-5 5v6l-2 3h14l-2-3V5c0-3-2-5-5-5zM6 15h4c0 2-4 2-4 0z" fill="#111"/></svg>
 <svg class="b" style="left:1381px;top:17px" width="16" height="20"><circle cx="8" cy="5" r="4.5" fill="#111"/><path d="M0 20c0-6 3-9 8-9s8 3 8 9z" fill="#111"/></svg>

 <div class="x bc" style="left:272px;top:84px"><b>Policies</b> &nbsp;›&nbsp; <b>Subscription Policies</b> &nbsp;›&nbsp; nobis corporis rerum</div>
 <div class="x ttl" style="left:272px;top:125px">nobis corporis rerum</div>
 <div class="chip cb" style="left:272px;top:164px;height:23px;line-height:23px;padding-left:26px;padding-right:7px"><svg class="b" style="left:7px;top:5px" width="13" height="13"><path d="M1 3h6M1 3v9h9V6" stroke="#2b64a0" stroke-width="1.5" fill="none"/><path d="M5 8l6-6 1.5 1.5-6 6H5z" fill="#2b64a0"/></svg>Write Access</div>
 <div class="chip fa" style="left:385px;top:164px;height:23px;line-height:23px;padding:0 7px">Failed</div>
 <div class="btn-f" style="left:1285px;top:108px;width:90px;height:32px"><span class="b" style="left:8px;top:8px;font-size:14px">Edit Policy</span></div>
 <div class="btn-o" style="left:1385px;top:108px;width:31px;height:32px"><div class="kb" style="left:13px;top:15px;transform:translateY(-50%) scale(.75)"><span></span></div></div>

 <div class="x" style="left:285px;top:254px;font-size:15px;color:#555">Overview</div>
 <div class="x" style="left:375px;top:254px;font-size:15px;font-weight:bold;color:#222">Data Sources</div>
 <div class="b" style="left:363px;top:273px;width:115px;height:2px;background:#c58a2f"></div>
 <div class="hl" style="left:248px;top:275px;width:1192px"></div>
 <div class="btn-o" style="left:272px;top:300px;width:91px;height:32px"><svg class="b" style="left:13px;top:10px" width="14" height="12"><path d="M0 1h14M3 6h8M5.5 11h3" stroke="#2b64a0" stroke-width="2"/></svg><span class="b" style="left:40px;top:7px">Filters</span></div>

 <div class="x th" style="left:288px;top:378px">Status</div><svg class="srt" style="left:325px;top:378px" width="8" height="13"><path d="M4 0L8 5H0zM4 13L0 8h8z" fill="#8e93a0"/></svg>
 <div class="x th" style="left:384px;top:378px">Data Source Name</div><svg class="srt" style="left:507px;top:378px" width="8" height="13"><path d="M4 0L8 5H0zM4 13L0 8h8z" fill="#8e93a0"/></svg>
 <div class="x th" style="left:630px;top:378px">Technology</div><svg class="srt" style="left:711px;top:378px" width="8" height="13"><path d="M4 0L8 5H0zM4 13L0 8h8z" fill="#8e93a0"/></svg>
 <div class="x th" style="left:813px;top:378px">Access Entitlements</div><svg class="srt" style="left:942px;top:378px" width="8" height="13"><path d="M4 0L8 5H0zM4 13L0 8h8z" fill="#8e93a0"/></svg>
 <div class="x th" style="left:996px;top:378px">Domain</div><svg class="srt" style="left:1056px;top:378px" width="8" height="13"><path d="M4 0L8 5H0zM4 13L0 8h8z" fill="#8e93a0"/></svg>
 <div class="x th" style="left:1180px;top:378px">Targeted Tags</div><svg class="srt" style="left:1275px;top:378px" width="8" height="13"><path d="M4 0L8 5H0zM4 13L0 8h8z" fill="#8e93a0"/></svg>
 <div class="x th" style="left:1364px;top:378px">Action</div>
 <div class="hl" style="left:272px;top:399px;width:1144px;height:2px"></div>

 <div class="hl" style="left:272px;top:444px;width:1144px"></div><div class="hl" style="left:272px;top:488px;width:1144px"></div><div class="hl" style="left:272px;top:532px;width:1144px"></div><div class="hl" style="left:272px;top:576px;width:1144px"></div><div class="hl" style="left:272px;top:620px;width:1144px"></div><div class="hl" style="left:272px;top:664px;width:1144px"></div><div class="hl" style="left:272px;top:708px;width:1144px"></div><div class="hl" style="left:272px;top:752px;width:1144px"></div><div class="hl" style="left:272px;top:796px;width:1144px"></div><div class="hl" style="left:272px;top:839px;width:1144px"></div><div class="hl" style="left:272px;top:884px;width:1144px"></div>

 <div class="st fa" style="left:288px;top:422px;width:67px">Failed</div>
 <div class="st pe" style="left:288px;top:466px;width:67px">Pending</div>
 <div class="st pe" style="left:288px;top:510px;width:67px">Pending</div>
 <div class="st pe" style="left:288px;top:554px;width:67px">Pending</div>
 <div class="st pe" style="left:288px;top:598px;width:67px">Pending</div>
 <div class="st ac" style="left:288px;top:642px;width:67px">Active</div>
 <div class="st ac" style="left:288px;top:686px;width:67px">Active</div>
 <div class="st ac" style="left:288px;top:730px;width:67px">Active</div>
 <div class="st ac" style="left:288px;top:774px;width:67px">Active</div>
 <div class="st ac" style="left:288px;top:818px;width:67px">Active</div>

 <div class="x lk" style="left:384px;top:422px;font-size:14.5px">Legacy Division Representative</div>
 <div class="x lk" style="left:384px;top:466px;font-size:14.5px">Global Response Designer</div>
 <div class="x lk" style="left:384px;top:510px;font-size:14.5px">Investor Identity Planner</div>
 <div class="x lk" style="left:384px;top:554px;font-size:14.5px">Regional Operations Consultant</div>
 <div class="x lk" style="left:384px;top:598px;font-size:14.5px">Regional Metrics Architect</div>
 <div class="x lk" style="left:384px;top:642px;font-size:14.5px">Investor Accounts Strategist</div>
 <div class="x lk" style="left:384px;top:686px;font-size:14.5px">Corporate Assurance Developer</div>
 <div class="x lk" style="left:384px;top:730px;font-size:14.5px">District Directives Strategist</div>
 <div class="x lk" style="left:384px;top:774px;font-size:14.5px">Customer Interactions Agent</div>
 <div class="x lk" style="left:384px;top:818px;font-size:14.5px">Regional Applications Executive</div>

 <div class="x td" style="left:630px;top:422px">Snowflake</div><div class="x td" style="left:630px;top:466px">Databricks</div><div class="x td" style="left:630px;top:510px">Snowflake</div><div class="x td" style="left:630px;top:554px">Snowflake</div><div class="x td" style="left:630px;top:598px">Databricks</div><div class="x td" style="left:630px;top:642px">Snowflake</div><div class="x td" style="left:630px;top:686px">Databricks</div><div class="x td" style="left:630px;top:730px">Snowflake</div><div class="x td" style="left:630px;top:774px">Databricks</div><div class="x td" style="left:630px;top:818px">Snowflake</div>

 <div class="chip cgs" style="left:813px;top:422px;width:50px;padding:0;text-align:center">Select</div><div class="chip cgs" style="left:871px;top:422px;width:54px;padding:0;text-align:center">Modify</div><div class="chip cgs" style="left:933px;top:422px;width:30px;padding:0;text-align:center">+1</div>
 <div class="chip cgs" style="left:813px;top:466px;width:54px;padding:0;text-align:center">Modify</div>
 <div class="chip cgs" style="left:813px;top:510px;width:50px;padding:0;text-align:center">Select</div><div class="chip cgs" style="left:871px;top:510px;width:54px;padding:0;text-align:center">Modify</div><div class="chip cgs" style="left:933px;top:510px;width:30px;padding:0;text-align:center">+1</div>
 <div class="chip cgs" style="left:813px;top:554px;width:50px;padding:0;text-align:center">Select</div><div class="chip cgs" style="left:871px;top:554px;width:54px;padding:0;text-align:center">Modify</div><div class="chip cgs" style="left:933px;top:554px;width:30px;padding:0;text-align:center">+1</div>
 <div class="chip cgs" style="left:813px;top:598px;width:54px;padding:0;text-align:center">Modify</div>
 <div class="chip cgs" style="left:813px;top:642px;width:50px;padding:0;text-align:center">Select</div><div class="chip cgs" style="left:871px;top:642px;width:54px;padding:0;text-align:center">Modify</div><div class="chip cgs" style="left:933px;top:642px;width:30px;padding:0;text-align:center">+1</div>
 <div class="chip cgs" style="left:813px;top:686px;width:54px;padding:0;text-align:center">Modify</div>
 <div class="chip cgs" style="left:813px;top:730px;width:50px;padding:0;text-align:center">Select</div><div class="chip cgs" style="left:871px;top:730px;width:54px;padding:0;text-align:center">Modify</div><div class="chip cgs" style="left:933px;top:730px;width:30px;padding:0;text-align:center">+1</div>
 <div class="chip cgs" style="left:813px;top:774px;width:54px;padding:0;text-align:center">Modify</div>
 <div class="chip cgs" style="left:813px;top:818px;width:50px;padding:0;text-align:center">Select</div><div class="chip cgs" style="left:871px;top:818px;width:54px;padding:0;text-align:center">Modify</div><div class="chip cgs" style="left:933px;top:818px;width:30px;padding:0;text-align:center">+1</div>

 <div class="x td" style="left:996px;top:422px">Marketing</div><div class="x td" style="left:996px;top:466px">Sales</div><div class="x td" style="left:996px;top:510px">Marketing</div><div class="x td" style="left:996px;top:554px">Marketing</div><div class="x td" style="left:996px;top:598px">Marketing</div><div class="x td" style="left:996px;top:642px">Sales</div><div class="x td" style="left:996px;top:686px">Marketing</div><div class="x td" style="left:996px;top:730px">Sales</div><div class="x td" style="left:996px;top:774px">Sales</div><div class="x td" style="left:996px;top:818px">Marketing</div>

 <div class="chip cg" style="left:1180px;top:422px;width:50px;padding:0;text-align:center">HIPPA</div>
 <div class="chip cg" style="left:1180px;top:466px;width:28px;padding:0;text-align:center">PI</div>
 <div class="chip cg" style="left:1180px;top:510px;width:28px;padding:0;text-align:center">PI</div>
 <div class="chip cg" style="left:1180px;top:554px;width:50px;padding:0;text-align:center">HIPPA</div><div class="chip cg" style="left:1246px;top:554px;width:28px;padding:0;text-align:center">PI</div>
 <div class="chip cg" style="left:1180px;top:598px;width:28px;padding:0;text-align:center">PI</div>
 <div class="chip cg" style="left:1180px;top:642px;width:50px;padding:0;text-align:center">HIPPA</div><div class="chip cg" style="left:1246px;top:642px;width:28px;padding:0;text-align:center">PI</div>
 <div class="chip cg" style="left:1180px;top:686px;width:50px;padding:0;text-align:center">HIPPA</div>
 <div class="chip cg" style="left:1180px;top:730px;width:28px;padding:0;text-align:center">PI</div>
 <div class="chip cg" style="left:1180px;top:774px;width:50px;padding:0;text-align:center">HIPPA</div><div class="chip cg" style="left:1246px;top:774px;width:28px;padding:0;text-align:center">PI</div>
 <div class="chip cg" style="left:1180px;top:818px;width:28px;padding:0;text-align:center">PI</div>

 <div class="kb" style="left:1390px;top:422px"><span></span></div><div class="kb" style="left:1390px;top:466px"><span></span></div><div class="kb" style="left:1390px;top:510px"><span></span></div><div class="kb" style="left:1390px;top:554px"><span></span></div><div class="kb" style="left:1390px;top:598px"><span></span></div><div class="kb" style="left:1390px;top:642px"><span></span></div><div class="kb" style="left:1390px;top:686px"><span></span></div><div class="kb" style="left:1390px;top:730px"><span></span></div><div class="kb" style="left:1390px;top:774px"><span></span></div><div class="kb" style="left:1390px;top:818px"><span></span></div>

 <div class="x" style="left:308px;top:862px;font-size:13px;color:#c8cad0">⏮</div>
 <div class="x" style="left:338px;top:862px;font-size:11px;color:#c8cad0">◀</div>
 <div class="b" style="left:361px;top:846px;width:32px;height:32px;border-radius:50%;background:#e8e9ee"></div>
 <div class="x" style="left:373px;top:862px;font-size:15px;color:#555">1</div>
 <div class="x" style="left:405px;top:862px;font-size:15px;color:#555">2</div>
 <div class="x" style="left:436px;top:862px;font-size:11px;color:#555">▶</div>
 <div class="x" style="left:466px;top:862px;font-size:13px;color:#555">⏭</div>
 <div class="x" style="right:222px;top:862px;font-size:15px;color:#7c808d">1 - 10 of 19 items</div>
 <div class="b" style="left:1233px;top:840px;width:1px;height:44px;background:#e2e4e8"></div>
 <div class="x" style="left:1259px;top:862px;font-size:15px;color:#555;font-weight:bold">10</div>
 <div class="x" style="left:1289px;top:862px;font-size:9px;color:#555">▼</div>
 <div class="x" style="left:1307px;top:862px;font-size:15px;color:#7c808d">items per page</div>
</div>
<script>
(function(){var w=Math.min(window.innerWidth||6080,document.documentElement.clientWidth||6080);if(w>0&&w<6080){document.body.style.transform='scaleX('+(w/6080)+')';}})();
</script>
</body></html>
